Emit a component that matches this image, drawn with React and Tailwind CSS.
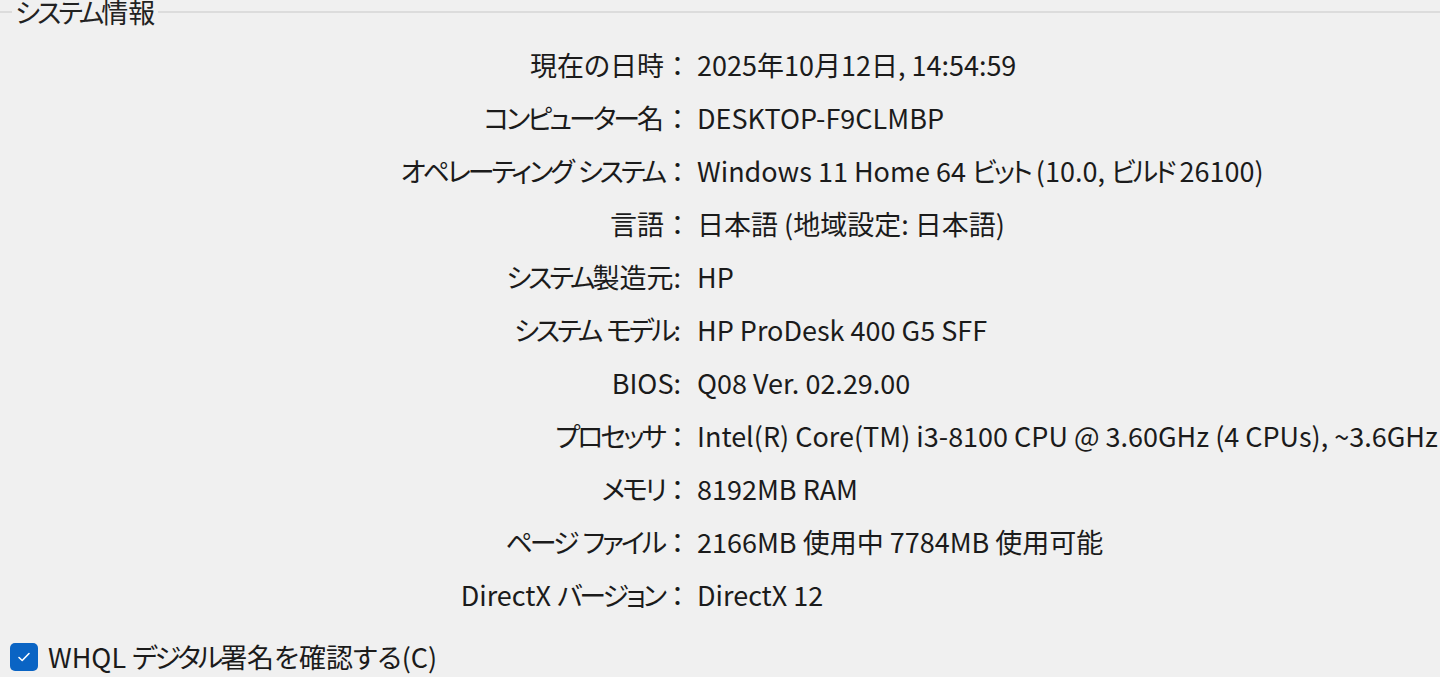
import React from "react";

const rows = [
  ["現在の日時", "：", "2025年10月12日, 14:54:59"],
  ["コンピューター名", "：", "DESKTOP-F9CLMBP"],
  ["オペレーティング システム", "：", "Windows 11 Home 64 ビット (10.0, ビルド 26100)"],
  ["言語", "：", "日本語 (地域設定: 日本語)"],
  ["システム製造元", ":", "HP"],
  ["システム モデル", ":", "HP ProDesk 400 G5 SFF"],
  ["BIOS", ":", "Q08 Ver. 02.29.00"],
  ["プロセッサ", "：", "Intel(R) Core(TM) i3-8100 CPU @ 3.60GHz (4 CPUs), ~3.6GHz"],
  ["メモリ", "：", "8192MB RAM"],
  ["ページ ファイル", "：", "2166MB 使用中 7784MB 使用可能"],
  ["DirectX バージョン", "：", "DirectX 12"],
];

// katakana in the original UI font is narrow, tighten those runs a bit
function Txt({ children }) {
  const parts = children.split(/([\u30A0-\u30FF]+)/);
  return parts.map((p, i) =>
    /[\u30A0-\u30FF]/.test(p) ? (
      <span key={i} className="tracking-[-3px]">
        {p}
      </span>
    ) : (
      p
    )
  );
}

export default function App() {
  return (
    <div
      className="w-[1440px] h-[677px] overflow-hidden bg-[#f0f0f0] text-[#1b1b1b] [font-feature-settings:'palt']"
      style={{ fontFamily: '"Noto Sans CJK JP", "Noto Sans", sans-serif' }}
    >
      {/* group box title */}
      <div className="flex items-center h-[24px]">
        <div className="w-[12px] border-t-2 border-[#dcdcdc]" />
        <span className="px-[3px] text-[27px] leading-[24px] text-[#222]">
          <Txt>システム</Txt>情報
        </span>
        <div className="flex-1 border-t-2 border-[#dcdcdc]" />
      </div>

      <div className="mt-[14px] grid grid-cols-[691px_1fr] gap-x-[6px]">
        {rows.map(([label, colon, value]) => (
          <React.Fragment key={label}>
            <div
              className={
                "text-right text-[27px] leading-[53px] whitespace-nowrap " +
                (colon === ":" ? "pr-[10px]" : "")
              }
            >
              <Txt>{label}</Txt>
              {colon === "：" ? (
                <span className="[font-feature-settings:normal]">：</span>
              ) : (
                ":"
              )}
            </div>
            <div className="text-[27px] leading-[53px] whitespace-nowrap">
              <Txt>{value}</Txt>
            </div>
          </React.Fragment>
        ))}
      </div>

      <div className="mt-[21px] ml-[10px] flex items-center gap-[10px]">
        <div className="w-[28px] h-[28px] rounded-[5px] bg-[#0a64c4] flex items-center justify-center">
          <svg width="16" height="16" viewBox="0 0 16 16" fill="none">
            <path d="M3 8.5l3.2 3L13 4.5" stroke="#fff" strokeWidth="1.6" strokeLinecap="round" strokeLinejoin="round" />
          </svg>
        </div>
        <span className="text-[27px] leading-[30px]">
          WHQL <Txt>デジタル</Txt>署名を確認する(C)
        </span>
      </div>
    </div>
  );
}
